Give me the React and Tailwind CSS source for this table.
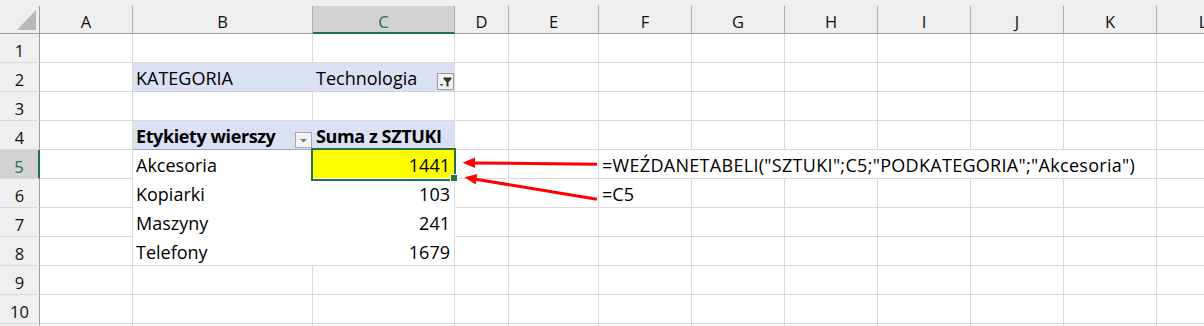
const W = {
  A: 'w-[93px]',
  B: 'w-[180px]',
  C: 'w-[142px]',
  D: 'w-[54px]',
  E: 'w-[90px]',
  F: 'w-[93px]',
  G: 'w-[93px]',
  H: 'w-[93px]',
  I: 'w-[93px]',
  J: 'w-[93px]',
  K: 'w-[93px]',
  L: 'w-[93px]',
};
const COLS = Object.keys(W);

const GRID = 'border-r-[#dadada] border-b-[#dadada]';

const Cell = ({ w, className = GRID, right = false, children }) => (
  <div className={`${w} shrink-0 h-full flex items-end border-r border-b ${right ? 'justify-end' : ''} ${className}`}>
    {children}
  </div>
);

const Txt = ({ right = false, bold = false, className = '', children }) => (
  <span
    className={`leading-[20px] mb-[3px] whitespace-nowrap ${right ? 'pr-[4px]' : 'pl-[3px]'} ${
      bold ? 'font-bold tracking-[-0.4px]' : ''
    } ${className}`}
  >
    {children}
  </span>
);

const plain = (keys) => keys.map((k) => <Cell key={k} w={W[k]} />);

const RowHead = ({ n, selected }) => (
  <div
    className={`w-[40px] shrink-0 h-full flex items-end justify-center border-b border-b-[#dadada] text-[16.5px] ${
      selected
        ? 'bg-[#d2d2d2] text-[#217346] border-r-2 border-r-[#217346]'
        : 'bg-[#efefef] text-[#111] border-r border-r-[#9e9e9e]'
    }`}
  >
    {n && <span className="leading-[20px] mb-px">{n}</span>}
  </div>
);

const Row = ({ n, selected = false, children }) => (
  <div className="flex h-[29px]">
    <RowHead n={n} selected={selected} />
    {children}
  </div>
);

const FilterButton = () => (
  <div className="w-[17px] h-[17px] mb-px shrink-0 border border-[#9a9a9a] bg-[#f3f3f3] flex items-center justify-center">
    <svg width="15" height="15" viewBox="0 0 15 15">
      <path d="M5.5 3.5h8v1.5l-3 3v4.5h-2V8l-3-3z" fill="#333" />
      <path d="M1.5 10h4l-2 2.2z" fill="#555" />
    </svg>
  </div>
);

const DropButton = () => (
  <div className="w-[17px] h-[16px] mb-px shrink-0 border border-[#a6a6a6] bg-[#f3f3f3] flex items-center justify-center">
    <svg width="15" height="14" viewBox="0 0 15 14">
      <path d="M4 6h7l-3.5 3.5z" fill="#7a7a7a" />
    </svg>
  </div>
);

const pivotRows = [
  { n: 5, label: 'Akcesoria', value: '1441' },
  { n: 6, label: 'Kopiarki', value: '103' },
  { n: 7, label: 'Maszyny', value: '241' },
  { n: 8, label: 'Telefony', value: '1679' },
];

export default function App() {
  return (
    <div className="relative w-[1204px] h-[326px] overflow-hidden bg-white text-black text-[18px] font-['Open_Sans',sans-serif]">
      <div className="h-[6px] bg-[#efefef]" />

      {/* column letters */}
      <div className="flex h-[28px] bg-[#efefef]">
        <div className="w-[40px] shrink-0 h-full border-r border-b border-r-[#9e9e9e] border-b-[#9e9e9e] flex items-end justify-end pr-[3px] pb-[3px]">
          <svg width="19" height="20" viewBox="0 0 19 20">
            <path d="M19 0V20H0z" fill="#b9b9b9" />
          </svg>
        </div>
        {COLS.map((k) =>
          k === 'C' ? (
            <div
              key={k}
              className={`${W[k]} shrink-0 h-full flex items-end justify-center bg-[#d2d2d2] text-[#217346] border-r border-r-[#ababab] border-b-2 border-b-[#217346] text-[16.5px]`}
            >
              <span className="leading-[20px]">{k}</span>
            </div>
          ) : (
            <div
              key={k}
              className={`${W[k]} shrink-0 h-full flex items-end justify-center text-[#111] border-r border-b border-r-[#ababab] border-b-[#9e9e9e] text-[16.5px]`}
            >
              <span className="leading-[20px] mb-px">{k}</span>
            </div>
          )
        )}
      </div>

      <Row n={1}>{plain(COLS)}</Row>

      <Row n={2}>
        {plain(['A'])}
        <Cell w={W.B} className="bg-[#d9e1f2] border-r-[#d9e1f2] border-b-[#c9d2e6]">
          <Txt>KATEGORIA</Txt>
        </Cell>
        <Cell w={W.C} className="bg-[#d9e1f2] border-r-[#dadada] border-b-[#c9d2e6]">
          <Txt>Technologia</Txt>
          <div className="ml-auto">
            <FilterButton />
          </div>
        </Cell>
        {plain(['D', 'E', 'F', 'G', 'H', 'I', 'J', 'K', 'L'])}
      </Row>

      <Row n={3}>{plain(COLS)}</Row>

      <Row n={4}>
        {plain(['A'])}
        <Cell w={W.B} className="bg-[#d9e1f2] border-r-[#d9e1f2] border-b-[#8ea9db]">
          <Txt bold>Etykiety wierszy</Txt>
          <div className="ml-auto">
            <DropButton />
          </div>
        </Cell>
        <Cell w={W.C} className="bg-[#d9e1f2] border-r-[#dadada] border-b-[#8ea9db]">
          <Txt bold>Suma z SZTUKI</Txt>
        </Cell>
        {plain(['D', 'E', 'F', 'G', 'H', 'I', 'J', 'K', 'L'])}
      </Row>

      {pivotRows.map((r) => {
        const last = r.n === 8;
        const bottom = last ? 'border-b-[#dadada]' : 'border-b-white';
        return (
          <Row key={r.n} n={r.n} selected={r.n === 5}>
            {plain(['A'])}
            <Cell w={W.B} className={`border-r-white ${bottom}`}>
              <Txt>{r.label}</Txt>
            </Cell>
            <Cell w={W.C} right className={`border-r-[#dadada] ${bottom} ${r.n === 5 ? 'bg-[#ffff00]' : ''}`}>
              <Txt right>{r.value}</Txt>
            </Cell>
            {plain(['D', 'E'])}
            {r.n === 5 ? (
              // long formula spills over F:K, so those cells lose their inner gridlines
              <Cell w="w-[558px]" className="border-r-[#dadada] border-b-[#dadada]">
                <Txt className="tracking-[0.3px]">=WEŹDANETABELI("SZTUKI";C5;"PODKATEGORIA";"Akcesoria")</Txt>
              </Cell>
            ) : (
              <Cell w={W.F}>{r.n === 6 && <Txt>=C5</Txt>}</Cell>
            )}
            {r.n === 5 ? plain(['L']) : plain(['G', 'H', 'I', 'J', 'K', 'L'])}
          </Row>
        );
      })}

      <Row n={9}>{plain(COLS)}</Row>
      <Row n={10}>{plain(COLS)}</Row>
      <Row>{plain(COLS)}</Row>

      {/* active cell frame + fill handle */}
      <div className="absolute left-[311px] top-[148px] w-[145px] h-[33px] border-2 border-[#217346] pointer-events-none" />
      <div className="absolute left-[450px] top-[174px] w-[8px] h-[8px] bg-[#217346] border border-white" />

      {/* arrows pointing at the pivot value */}
      <svg className="absolute left-0 top-0 pointer-events-none" width="1204" height="326" viewBox="0 0 1204 326">
        <line x1="597" y1="164.3" x2="472" y2="162.9" stroke="#ff0000" strokeWidth="3" />
        <path d="M462.5 162.7 L475 157.6 L475 168 Z" fill="#ff0000" />
        <line x1="597" y1="199.3" x2="474" y2="178.9" stroke="#ff0000" strokeWidth="3" />
        <path d="M464.5 177.3 L475.6 184.4 L477.3 174.1 Z" fill="#ff0000" />
      </svg>
    </div>
  );
}
